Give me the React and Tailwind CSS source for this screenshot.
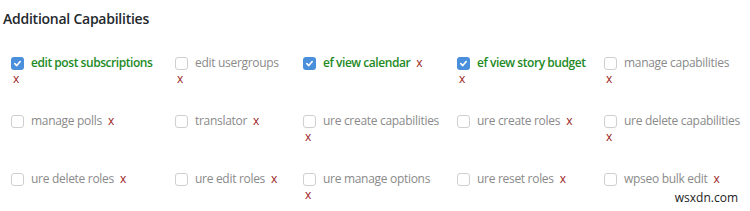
import React from "react";

const rows = [
  [
    { label: "edit post subscriptions", checked: true, wrap: true },
    { label: "edit usergroups", wrap: true },
    { label: "ef view calendar", checked: true },
    { label: "ef view story budget", checked: true, wrap: true },
    { label: "manage capabilities", wrap: true },
  ],
  [
    { label: "manage polls" },
    { label: "translator" },
    { label: "ure create capabilities", wrap: true },
    { label: "ure create roles" },
    { label: "ure delete capabilities", wrap: true },
  ],
  [
    { label: "ure delete roles" },
    { label: "ure edit roles" },
    { label: "ure manage options", wrap: true },
    { label: "ure reset roles" },
    { label: "wpseo bulk edit" },
  ],
];

function Box({ checked }) {
  if (checked) {
    return (
      <span className="inline-flex w-[13px] h-[13px] rounded-[3px] bg-[#4a8fdc] items-center justify-center shrink-0">
        <svg width="9" height="9" viewBox="0 0 10 10">
          <path d="M2 5.2 L4.2 7.3 L8 2.8" fill="none" stroke="white" strokeWidth="1.8" strokeLinecap="round" strokeLinejoin="round" />
        </svg>
      </span>
    );
  }
  return <span className="inline-block w-[13px] h-[13px] rounded-[3px] border border-[#cfcfcf] bg-white shrink-0" />;
}

function Cap({ label, checked, wrap }) {
  const x = <span className="text-[#9b1c1c] text-[12px]">x</span>;
  return (
    <div className="text-[12px] leading-[16px]">
      <div className="flex items-center">
        <Box checked={checked} />
        <span className={checked ? "ml-[7px] font-semibold text-[#238a1f] tracking-[-0.45px]" : "ml-[7px] text-[#8a8a8a] tracking-[-0.3px]"}>
          {label}
        </span>
        {!wrap && <span className="ml-[6px]">{x}</span>}
      </div>
      {wrap && <div className="pl-[2px]">{x}</div>}
    </div>
  );
}

export default function App() {
  return (
    <div className="relative w-[750px] h-[211px] bg-white overflow-hidden" style={{ fontFamily: '"Open Sans", sans-serif' }}>
      <h2 className="pl-[3px] pt-[10px] text-[14px] leading-[18px] font-semibold text-[#23282d] tracking-[-0.25px]">Additional Capabilities</h2>
      <div className="pl-[11px] pt-[27px] flex flex-col gap-[26px]">
        {rows.map((row, i) => (
          <div key={i} className="grid grid-cols-[164px_128px_154px_147px_1fr]">
            {row.map((c) => (
              <Cap key={c.label} {...c} />
            ))}
          </div>
        ))}
      </div>
      <div className="absolute right-[12px] bottom-[4px] text-[12px] text-[#222]">wsxdn.com</div>
    </div>
  );
}
